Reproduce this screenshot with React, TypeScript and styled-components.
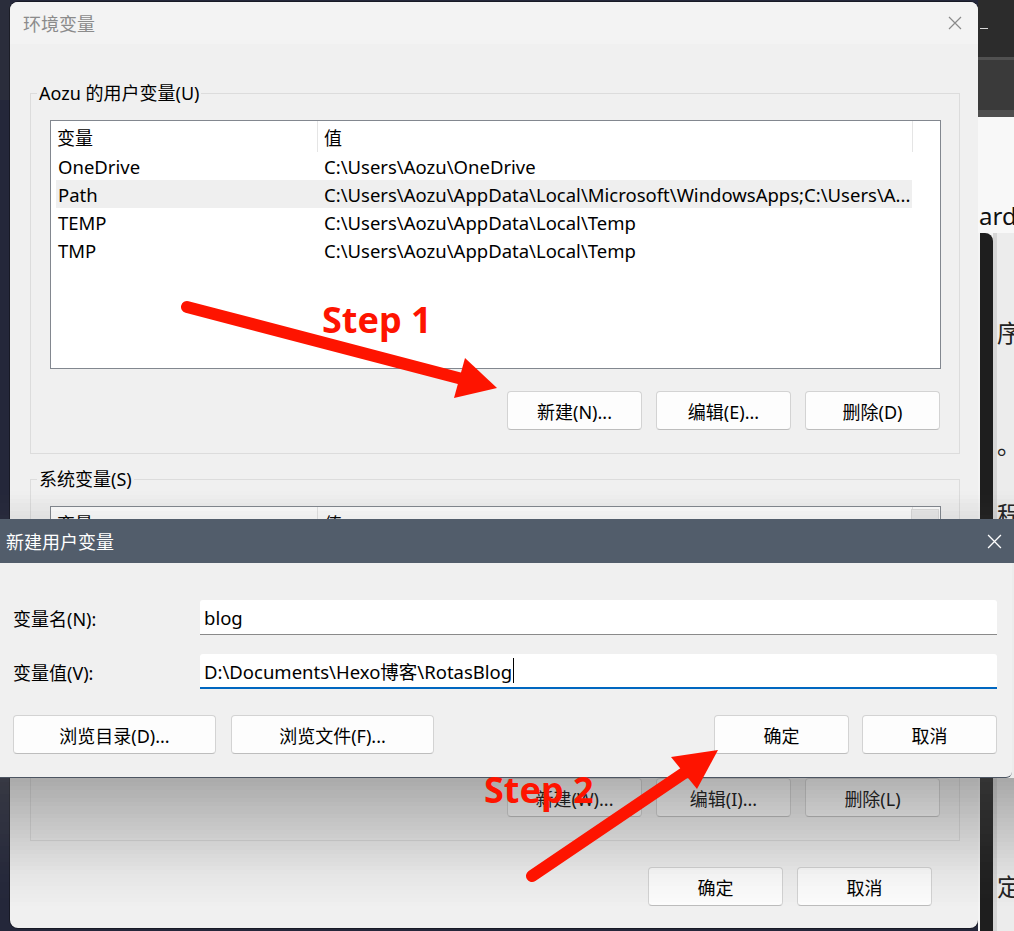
import React from "react";
import styled, { createGlobalStyle } from "styled-components";

const FONT = `"Noto Sans", "Noto Sans CJK SC", sans-serif`;

const Global = createGlobalStyle`
  html, body { margin: 0; padding: 0; }
  body {
    width: 1014px; height: 931px; overflow: hidden;
    background: #24273a;
    font-family: ${FONT};
  }
`;

const Desktop = styled.div`
  position: relative;
  width: 1014px;
  height: 931px;
  overflow: hidden;
  display: grid;
  grid-template-columns: 10px 968px 1fr;
  background: #24273a;
  font-family: ${FONT};
  color: #000;
`;

const LeftStrip = styled.div`
  background: #24273a;
  border-top: 100px solid #2a2d3b;
`;

const Window = styled.div`
  margin-top: 2px;
  height: 926px;
  background: #f0f0f0;
  border-radius: 8px;
  overflow: hidden;
  display: flex;
  flex-direction: column;
  box-shadow: 0 0 0 1px rgba(0, 0, 0, 0.35);
`;

const TitleBar = styled.div`
  height: 42px;
  flex: none;
  background: #f3f3f3;
  display: flex;
  align-items: center;
  justify-content: space-between;
  padding: 0 16px 0 13px;
  color: #8b8b8b;
  font-size: 18px;
`;

const WinBody = styled.div`
  flex: 1;
  display: flex;
  flex-direction: column;
  padding: 0 18px 0 20px;
`;

const Group = styled.fieldset<{ $mt: number }>`
  margin: ${(p) => p.$mt}px 0 0 0;
  min-width: 0;
  padding: 15px 18px 23px 6px;
  border: 1px solid #dcdcdc;
  display: flex;
  flex-direction: column;
`;

const Legend = styled.legend`
  padding: 0 2px;
  font-size: 18px;
  line-height: 24px;
  color: #000;
`;

const ListBox = styled.div<{ $h: number }>`
  margin-left: 13px;
  height: ${(p) => p.$h}px;
  box-sizing: border-box;
  border: 1px solid #82878f;
  background: #fff;
  display: flex;
  overflow: hidden;
`;

const ListMain = styled.div`
  flex: 1;
  min-width: 0;
  display: flex;
  flex-direction: column;
`;

const HeaderRow = styled.div`
  display: grid;
  grid-template-columns: 267px 595px;
  height: 31px;
  flex: none;
`;

const HeaderCell = styled.div`
  padding-left: 6px;
  border-right: 1px solid #e5e5e5;
  display: flex;
  align-items: center;
  font-size: 18px;
`;

const DataRow = styled.div<{ $active?: boolean }>`
  display: grid;
  grid-template-columns: 261px 595px;
  margin-left: 5px;
  width: 856px;
  height: 28px;
  background: ${(p) => (p.$active ? "#efefef" : "transparent")};
  font-size: 18.5px;
  align-items: center;
`;

const Cell = styled.div<{ $pl: number }>`
  padding-left: ${(p) => p.$pl}px;
  white-space: nowrap;
  overflow: hidden;
`;

const ScrollBar = styled.div`
  width: 26px;
  flex: none;
  margin: 2px 1px 0 0;
  background: #ececec;
  border: 1px solid #dcdcdc;
`;

const ButtonRow = styled.div<{ $mt: number; $mr?: number }>`
  display: flex;
  justify-content: flex-end;
  gap: 14px;
  margin-top: ${(p) => p.$mt}px;
  margin-right: ${(p) => p.$mr ?? 1}px;
`;

const Btn = styled.button<{ $w?: number }>`
  width: ${(p) => p.$w ?? 135}px;
  height: 39px;
  box-sizing: border-box;
  padding: 0;
  background: #fdfdfd;
  border: 1px solid #d3d3d3;
  border-bottom-color: #bdbdbd;
  border-radius: 4px;
  font-family: ${FONT};
  font-size: 18px;
  color: #000;
`;

const RightApp = styled.div`
  display: flex;
  flex-direction: column;
  background: #f4f4f4;
  overflow: hidden;
`;

const AppTitle = styled.div`
  height: 57px;
  flex: none;
  background: #2c2c2c;
  display: flex;
  align-items: center;
  padding-left: 2px;
  box-sizing: border-box;
`;

const MinGlyph = styled.div`
  width: 8px;
  height: 1px;
  background: #d8d8d8;
`;

const AppTabs = styled.div`
  height: 60px;
  flex: none;
  box-sizing: border-box;
  background: #3a3a3a;
  border-top: 3px solid #505050;
  border-bottom: 7px solid #4e4e4e;
`;

const AppHeader = styled.div`
  height: 116px;
  flex: none;
  background: #f8f8f8;
  box-sizing: border-box;
  padding: 84px 0 0 1px;
  font-size: 24px;
  line-height: 30px;
  white-space: nowrap;
  color: #111;
`;

const AppMain = styled.div`
  flex: 1;
  display: flex;
`;

const DarkStrip = styled.div`
  width: 13px;
  margin-left: 2px;
  flex: none;
  background: #1e1e1e;
  border-top-right-radius: 8px;
`;

const AppText = styled.div`
  flex: 1;
  display: flex;
  flex-direction: column;
  background: #ececec;
  border-left: 4px solid #d6d6d6;
  font-size: 24px;
  line-height: 30px;
  color: #222;
  white-space: nowrap;
`;

const Glyph = styled.div<{ $mt: number }>`
  margin-top: ${(p) => p.$mt}px;
`;

const Dialog = styled.div`
  position: absolute;
  top: 491px;
  left: 0;
  width: 1014px;
  z-index: 5;
  display: flex;
  flex-direction: column;
`;

/* the soft shadow the dialog casts, built from thin translucent bands */
const Shade = styled.div`
  flex: none;
  display: flex;
  flex-direction: column;
`;

const ShadeBand = styled.div<{ $h: number }>`
  height: ${(p) => p.$h}px;
  flex: none;
`;

const DlgFrame = styled.div`
  width: 1012px;
  display: flex;
  flex-direction: column;
`;

const DlgTitle = styled.div`
  height: 44px;
  background: #525d6b;
  color: #fff;
  font-size: 18px;
  display: flex;
  align-items: center;
  justify-content: space-between;
  padding: 0 12px 0 6px;
  margin-right: -2px;
`;

const DlgBody = styled.div`
  background: #f0f0f0;
  padding: 37px 15px 23px 13px;
  display: flex;
  flex-direction: column;
  border-bottom: 1px solid #4c5562;
  border-bottom-right-radius: 6px;
`;

const FieldRow = styled.div<{ $mt?: number }>`
  display: grid;
  grid-template-columns: 187px 797px;
  align-items: center;
  height: 35px;
  margin-top: ${(p) => p.$mt ?? 0}px;
  font-size: 18px;
`;

const FieldBox = styled.div<{ $focused?: boolean }>`
  height: 35px;
  box-sizing: border-box;
  background: #fff;
  border-bottom: ${(p) => (p.$focused ? "2px solid #0067c0" : "1px solid #8a8a8a")};
  border-radius: 3px 3px 0 0;
  padding-left: 4px;
  display: flex;
  align-items: center;
  font-size: 18.5px;
  white-space: nowrap;
`;

const Caret = styled.span`
  display: inline-block;
  width: 1px;
  height: 25px;
  background: #000;
  margin-left: 1px;
`;

const DlgButtons = styled.div`
  display: flex;
  justify-content: space-between;
  margin-top: 26px;
`;

const BtnGroup = styled.div<{ $gap: number }>`
  display: flex;
  gap: ${(p) => p.$gap}px;
`;

const Overlay = styled.svg`
  position: absolute;
  left: 0;
  top: 0;
  z-index: 10;
  pointer-events: none;
`;

const CloseIcon = ({ color, size }: { color: string; size: number }) => (
  <svg width={size} height={size} viewBox="0 0 14 14">
    <path d="M1 1 L13 13 M13 1 L1 13" stroke={color} strokeWidth="1.2" fill="none" />
  </svg>
);

/* piecewise-linear shadow intensity */
const interp = (pts: [number, number][], y: number) => {
  for (let i = 0; i < pts.length - 1; i++) {
    const [y0, a0] = pts[i];
    const [y1, a1] = pts[i + 1];
    if (y >= y0 && y <= y1) return a0 + ((a1 - a0) * (y - y0)) / (y1 - y0);
  }
  return 0;
};

const BELOW: [number, number][] = [
  [0, 0.44],
  [20, 0.36],
  [62, 0.2],
  [98, 0.06],
  [130, 0],
];
const ABOVE: [number, number][] = [
  [0, 0],
  [28, 0.1],
];

const bands = (pts: [number, number][], total: number, step: number) =>
  Array.from({ length: Math.ceil(total / step) }, (_, i) => {
    const a = interp(pts, i * step + step / 2);
    return { h: step, bg: `rgba(80, 80, 80, ${a.toFixed(3)})` };
  });

const belowBands = bands(BELOW, 130, 4);
const aboveBands = bands(ABOVE, 28, 4);

const userVars = [
  ["OneDrive", "C:\\Users\\Aozu\\OneDrive"],
  ["Path", "C:\\Users\\Aozu\\AppData\\Local\\Microsoft\\WindowsApps;C:\\Users\\A..."],
  ["TEMP", "C:\\Users\\Aozu\\AppData\\Local\\Temp"],
  ["TMP", "C:\\Users\\Aozu\\AppData\\Local\\Temp"],
];

const sysVars = [
  ["ComSpec", "C:\\Windows\\system32\\cmd.exe"],
  ["DriverData", "C:\\Windows\\System32\\Drivers\\DriverData"],
  ["NUMBER_OF_PROCESSORS", "16"],
  ["OS", "Windows_NT"],
];

export default function App() {
  return (
    <>
      <Global />
      <Desktop>
        <LeftStrip />
        <Window>
          <TitleBar>
            <span>环境变量</span>
            <CloseIcon color="#8a8a8a" size={14} />
          </TitleBar>
          <WinBody>
            <Group $mt={37}>
              <Legend>Aozu 的用户变量(U)</Legend>
              <ListBox $h={249}>
                <ListMain>
                  <HeaderRow>
                    <HeaderCell>变量</HeaderCell>
                    <HeaderCell>值</HeaderCell>
                  </HeaderRow>
                  {userVars.map(([k, v]) => (
                    <DataRow key={k} $active={k === "Path"}>
                      <Cell $pl={2}>{k}</Cell>
                      <Cell $pl={7}>{v}</Cell>
                    </DataRow>
                  ))}
                </ListMain>
              </ListBox>
              <ButtonRow $mt={22}>
                <Btn>新建(N)...</Btn>
                <Btn>编辑(E)...</Btn>
                <Btn>删除(D)</Btn>
              </ButtonRow>
            </Group>
            <Group $mt={13}>
              <Legend>系统变量(S)</Legend>
              <ListBox $h={250}>
                <ListMain>
                  <HeaderRow>
                    <HeaderCell>变量</HeaderCell>
                    <HeaderCell>值</HeaderCell>
                  </HeaderRow>
                  {sysVars.map(([k, v]) => (
                    <DataRow key={k}>
                      <Cell $pl={2}>{k}</Cell>
                      <Cell $pl={7}>{v}</Cell>
                    </DataRow>
                  ))}
                </ListMain>
                <ScrollBar />
              </ListBox>
              <ButtonRow $mt={22}>
                <Btn>新建(W)...</Btn>
                <Btn>编辑(I)...</Btn>
                <Btn>删除(L)</Btn>
              </ButtonRow>
            </Group>
            <ButtonRow $mt={26} $mr={28}>
              <Btn>确定</Btn>
              <Btn>取消</Btn>
            </ButtonRow>
          </WinBody>
        </Window>
        <RightApp>
          <AppTitle>
            <MinGlyph />
          </AppTitle>
          <AppTabs />
          <AppHeader>ard</AppHeader>
          <AppMain>
            <DarkStrip />
            <AppText>
              <Glyph $mt={85}>序</Glyph>
              <Glyph $mt={82}>。</Glyph>
              <Glyph $mt={40}>程</Glyph>
              <Glyph $mt={342}>定</Glyph>
            </AppText>
          </AppMain>
        </RightApp>

        <Dialog>
          <Shade>
            {aboveBands.map((b, i) => (
              <ShadeBand key={i} $h={b.h} style={{ background: b.bg }} />
            ))}
          </Shade>
          <DlgFrame>
            <DlgTitle>
              <span>新建用户变量</span>
              <CloseIcon color="#ffffff" size={15} />
            </DlgTitle>
            <DlgBody>
              <FieldRow>
                <span>变量名(N):</span>
                <FieldBox>blog</FieldBox>
              </FieldRow>
              <FieldRow $mt={19}>
                <span>变量值(V):</span>
                <FieldBox $focused>
                  D:\Documents\Hexo博客\RotasBlog
                  <Caret />
                </FieldBox>
              </FieldRow>
              <DlgButtons>
                <BtnGroup $gap={15}>
                  <Btn $w={203}>浏览目录(D)...</Btn>
                  <Btn $w={203}>浏览文件(F)...</Btn>
                </BtnGroup>
                <BtnGroup $gap={13}>
                  <Btn>确定</Btn>
                  <Btn>取消</Btn>
                </BtnGroup>
              </DlgButtons>
            </DlgBody>
          </DlgFrame>
          <Shade>
            {belowBands.map((b, i) => (
              <ShadeBand key={i} $h={b.h} style={{ background: b.bg }} />
            ))}
          </Shade>
        </Dialog>

        <Overlay width={1014} height={931} viewBox="0 0 1014 931">
          <g fill="#fe1400" stroke="none">
            <line x1={187} y1={307} x2={466} y2={380} stroke="#fe1400" strokeWidth={12} strokeLinecap="round" />
            <polygon points="497,388 465,358 454,398" />
            <line x1={532} y1={876} x2={690} y2={769} stroke="#fe1400" strokeWidth={12} strokeLinecap="round" />
            <polygon points="718,750 671,757 697,789" />
            <text x={322} y={333} fontFamily={FONT} fontWeight={700} fontSize={36}>
              Step 1
            </text>
            <text x={484} y={803} fontFamily={FONT} fontWeight={700} fontSize={36}>
              Step 2
            </text>
          </g>
        </Overlay>
      </Desktop>
    </>
  );
}
